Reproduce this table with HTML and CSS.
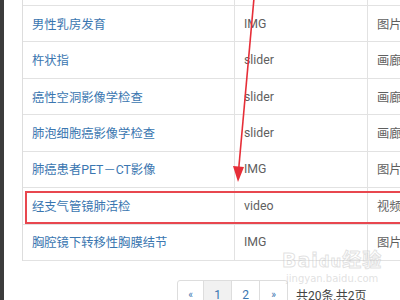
FILE: index.html
```html
<!DOCTYPE html>
<html>
<head>
<meta charset="utf-8">
<link rel="stylesheet" href="styles.css">
</head>
<body>
<div class="strip"></div>
<main class="page">
  <div class="table">
    <div class="row stub"><div class="c1"></div><div class="c2"></div><div class="c3"></div></div>
    <div class="row"><div class="c1"><a>男性乳房发育</a></div><div class="c2">IMG</div><div class="c3">图片</div></div>
    <div class="row"><div class="c1"><a>杵状指</a></div><div class="c2">slider</div><div class="c3">画廊</div></div>
    <div class="row"><div class="c1"><a>癌性空洞影像学检查</a></div><div class="c2">slider</div><div class="c3">画廊</div></div>
    <div class="row"><div class="c1"><a>肺泡细胞癌影像学检查</a></div><div class="c2">slider</div><div class="c3">画廊</div></div>
    <div class="row"><div class="c1"><a>肺癌患者PET－CT影像</a></div><div class="c2">IMG</div><div class="c3">图片</div></div>
    <div class="row"><div class="c1"><a>经支气管镜肺活检</a></div><div class="c2">video</div><div class="c3">视频</div></div>
    <div class="row"><div class="c1"><a>胸腔镜下转移性胸膜结节</a></div><div class="c2">IMG</div><div class="c3">图片</div></div>
  </div>
  <div class="pager">
    <ul class="pages">
      <li>«</li>
      <li class="active">1</li>
      <li>2</li>
      <li>»</li>
    </ul>
    <span class="total">共20条,共2页</span>
  </div>
</main>
<div class="highlight"></div>
<svg class="arrow" width="400" height="300" viewBox="0 0 400 300">
  <line x1="254" y1="-2" x2="238.6" y2="170" stroke="#e62e38" stroke-width="1.6"/>
  <polygon points="233,166 244,167 238,182" fill="#e62e38"/>
</svg>
<div class="watermark">
  <div class="wm-logo">Bai<span class="du">du</span>经验</div>
  <div class="wm-url">jingyan.baidu.com</div>
</div>
</body>
</html>
```
FILE: styles.css
```css
html, body {
  margin: 0;
  padding: 0;
  width: 400px;
  height: 300px;
  overflow: hidden;
  background: #fff;
}
body {
  display: flex;
  position: relative;
  font-family: Roboto, "Noto Sans CJK SC", sans-serif;
  font-size: 12.3px;
}
.strip {
  width: 4px;
  flex: none;
  background: #3c3c3c;
}
.page {
  flex: 1;
  padding-left: 18px;
}
.table {
  width: 420px;
  border-left: 1px solid #dddddd;
  border-right: 1px solid #dddddd;
}
.row {
  display: grid;
  grid-template-columns: 211px 133px 1fr;
  height: 36.43px;
  box-sizing: border-box;
  border-bottom: 1px solid #e2e2e2;
  align-items: center;
}
.row.stub {
  height: 6px;
}
.row > div {
  height: 100%;
  display: flex;
  align-items: center;
  box-sizing: border-box;
  padding-left: 9px;
  white-space: nowrap;
}
.c2, .c3 {
  border-left: 1px solid #e2e2e2;
  color: #5f5f5f;
}
.c1 a {
  color: #3a76b0;
}
.pager {
  display: flex;
  align-items: center;
  margin-top: 19px;
  margin-left: 155px;
}
.pages {
  display: flex;
  list-style: none;
  margin: 0;
  padding: 0;
  border: 1px solid #dddddd;
  border-radius: 3px;
}
.pages li {
  width: 27px;
  height: 28px;
  display: flex;
  align-items: center;
  justify-content: center;
  color: #3a76b0;
  border-left: 1px solid #dddddd;
  font-size: 12px;
}
.pages li:first-child {
  border-left: none;
  width: 25px;
  font-size: 10px;
}
.pages li:last-child {
  font-size: 10px;
}
.pages li.active {
  background: #f1f1f1;
}
.total {
  margin-left: 8px;
  color: #444;
  font-size: 12px;
}
.highlight {
  position: absolute;
  left: 25px;
  top: 191px;
  width: 390px;
  height: 33px;
  box-sizing: border-box;
  border: 2px solid #e8474f;
}
.arrow {
  position: absolute;
  left: 0;
  top: 0;
}
.watermark {
  position: absolute;
  left: 282px;
  top: 248px;
  text-align: center;
}
.wm-logo {
  font-family: "DejaVu Sans", "Noto Sans CJK SC", sans-serif;
  font-weight: bold;
  font-size: 19px;
  line-height: 24px;
  color: rgba(255,255,255,0.3);
  -webkit-text-stroke: 1px rgba(190,190,190,0.45);
  letter-spacing: 1px;
}
.wm-logo .du {
  font-size: 15px;
}
.wm-url {
  font-family: "DejaVu Sans", sans-serif;
  font-size: 10px;
  line-height: 12px;
  color: rgba(200,200,200,0.55);
  margin-top: -1px;
}
```
